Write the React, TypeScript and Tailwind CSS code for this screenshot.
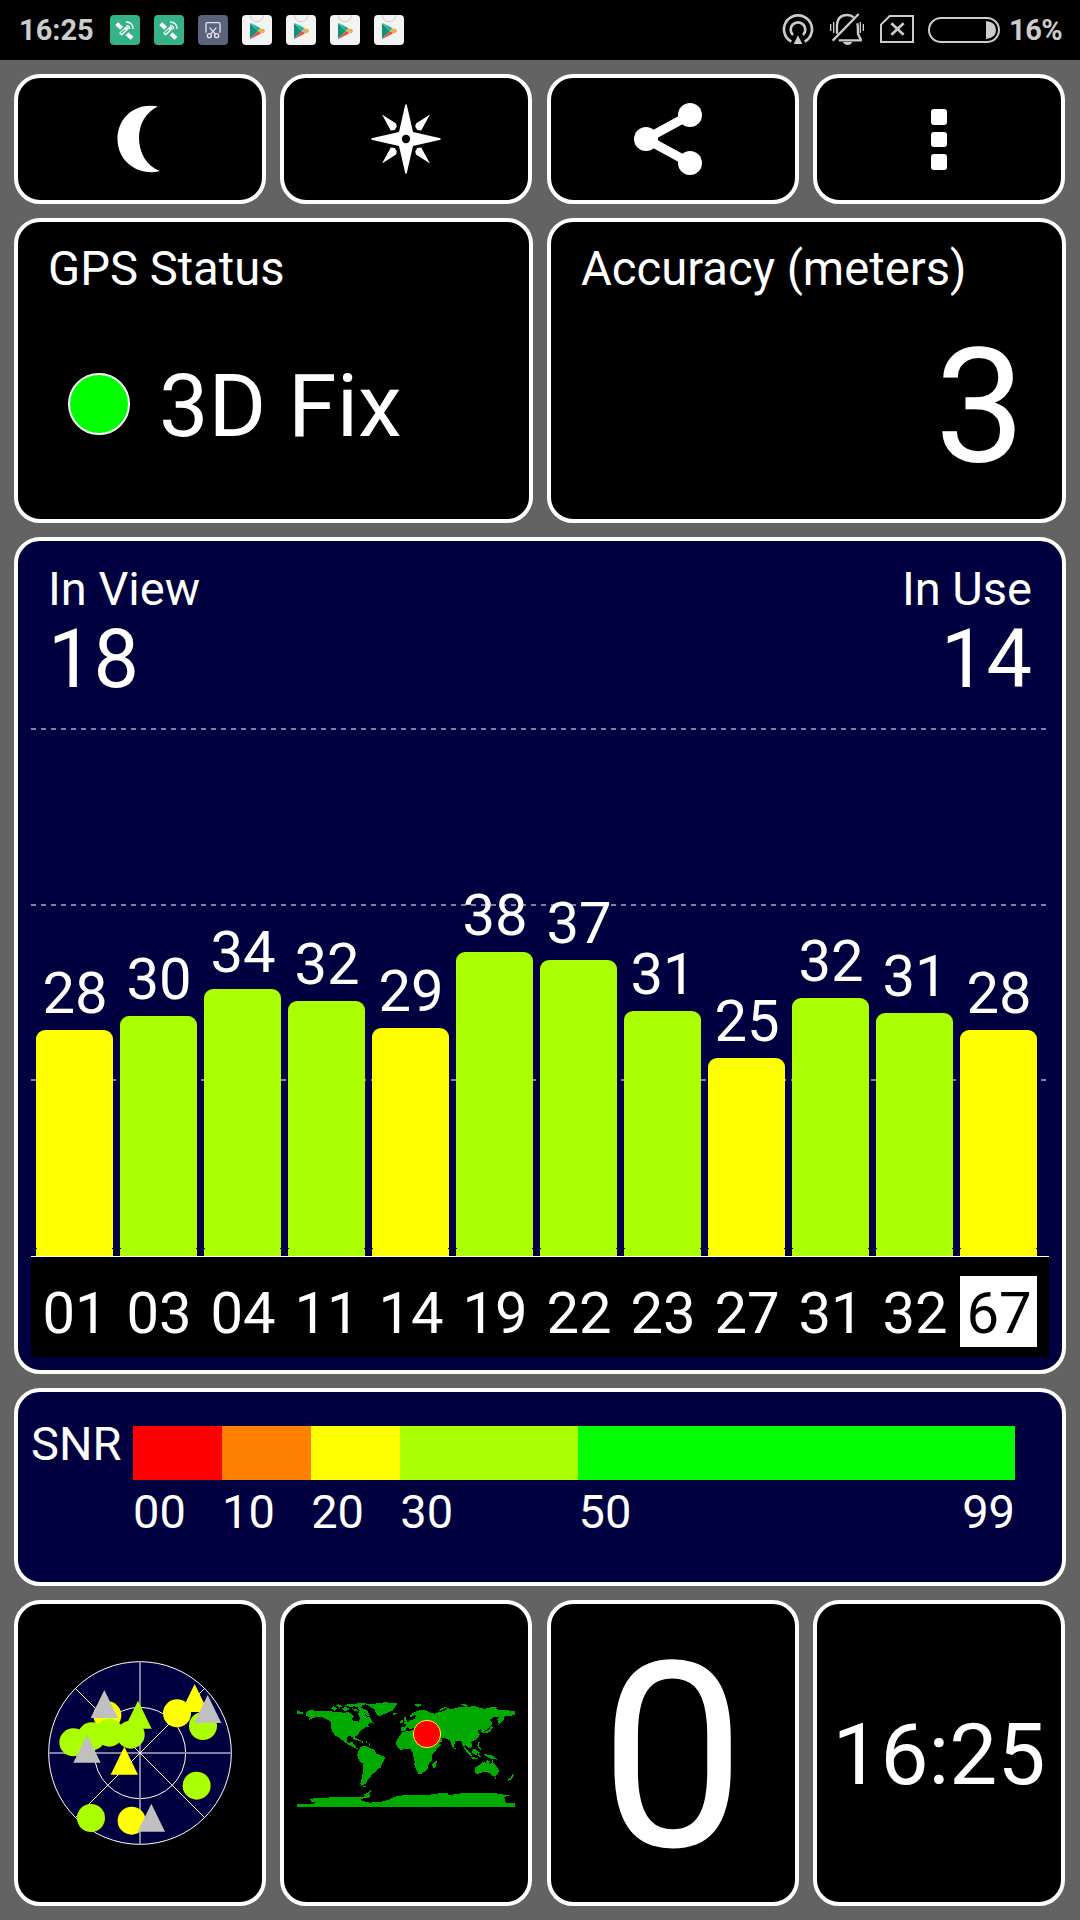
import React from "react";

const YELLOW = "#ffff00";
const LIME = "#aaff00";

const satellites = [
  { id: "01", snr: 28, height: 226, color: YELLOW },
  { id: "03", snr: 30, height: 240, color: LIME },
  { id: "04", snr: 34, height: 267, color: LIME },
  { id: "11", snr: 32, height: 255, color: LIME },
  { id: "14", snr: 29, height: 228, color: YELLOW },
  { id: "19", snr: 38, height: 304, color: LIME },
  { id: "22", snr: 37, height: 296, color: LIME },
  { id: "23", snr: 31, height: 245, color: LIME },
  { id: "27", snr: 25, height: 198, color: YELLOW },
  { id: "31", snr: 32, height: 258, color: LIME },
  { id: "32", snr: 31, height: 243, color: LIME },
  { id: "67", snr: 28, height: 226, color: YELLOW, inverted: true },
];

const snrScale = [
  { label: "00", span: 10, color: "#ff0000" },
  { label: "10", span: 10, color: "#ff8000" },
  { label: "20", span: 10, color: "#ffff00" },
  { label: "30", span: 20, color: "#aaff00" },
  { label: "50", span: 49, color: "#00ff00", end: "99" },
];

function Card({ className = "", children }: { className?: string; children?: React.ReactNode }) {
  return <section className={`rounded-[26px] border-4 border-white ${className}`}>{children}</section>;
}

function SatelliteIcon() {
  return (
    <svg width="30" height="30" viewBox="0 0 90 90" className="rounded-[4px] bg-[#35b288]">
      <g stroke="#fff" fill="none">
        <path d="M20 26l15 14M51 56l15 14" strokeWidth="12" />
        <path d="M31 58l22-21" strokeWidth="11" />
        <path d="M33 55l12-11" strokeWidth="4" stroke="#35b288" />
        <path d="M49 31q10 1 10 11M48 21q21 1 21 21" strokeWidth="4" />
      </g>
    </svg>
  );
}

function ScreenshotIcon() {
  return (
    <svg width="30" height="30" viewBox="0 0 90 90" className="rounded-[4px] bg-[#5b627c]">
      <g stroke="#e4e6ee" fill="none" strokeWidth="4">
        <path d="M24 53V27q0-4 4-4h34q4 0 4 4v26" />
        <path d="M35 38l18 20M55 38L37 58" />
        <circle cx="34" cy="62" r="6" />
        <circle cx="56" cy="62" r="6" />
      </g>
    </svg>
  );
}

function PlayStoreIcon() {
  return (
    <svg width="30" height="30" viewBox="0 0 90 90" className="rounded-[4px] bg-[#f3f3f3]">
      <path d="M25 0q3 20 20 20T65 0" fill="none" stroke="#c9c9c9" strokeWidth="3" />
      <path d="M24 24v48l24-24z" fill="#12907a" />
      <path d="M26 24l22 24 8-8z" fill="#16b796" />
      <path d="M24 73l24-25 10 7z" fill="#e8503f" />
      <path d="M48 48l8-7h8l6 6-5 7h-9z" fill="#e9ae51" />
    </svg>
  );
}

function StatusBar() {
  return (
    <header className="flex h-[60px] items-center bg-black pl-[19px] pr-[18px] text-[29px] font-bold leading-none text-[#cccccc]">
      <span className="w-[91px]">16:25</span>
      <div className="flex gap-[14px]">
        <SatelliteIcon />
        <SatelliteIcon />
        <ScreenshotIcon />
        <PlayStoreIcon />
        <PlayStoreIcon />
        <PlayStoreIcon />
        <PlayStoreIcon />
      </div>
      <svg width="240" height="34" viewBox="60 39 720 102" className="ml-auto" fill="none" stroke="#cccccc">
        <path d="M94 125a42 42 0 1 1 40 0" strokeWidth="8" />
        <path d="M99 105a22 22 0 1 1 30 0" strokeWidth="8" />
        <path d="M114 106l13 26h-26z" fill="#cccccc" stroke="none" />
        <path d="M231 101V75q2-30 31-30 12 0 19 7M292 70q2 8 2 32l8 16v3h-66" strokeWidth="7" />
        <path d="M218 122l78-80" strokeWidth="7" />
        <path d="M249 126h28q-4 9-14 9t-14-9z" fill="#cccccc" stroke="none" />
        <path d="M212 72v21M221 66v33M301 66v33M310 72v21" strokeWidth="4" />
        <path d="M363 74l26-26h70v78h-96z" strokeWidth="6" />
        <path d="M394 70l37 34M431 70l-37 34" strokeWidth="8" />
        <rect x="507" y="54" width="210" height="72" rx="36" strokeWidth="6" />
        <path d="M678 63q30 3 30 27t-30 27z" fill="#cccccc" stroke="none" />
      </svg>
      <span className="ml-[-11px] w-[53px] text-right text-[29px] tracking-[-0.5px]">16%</span>
    </header>
  );
}

function Toolbar() {
  const button = "flex h-full w-[252px] items-center justify-center bg-black";
  return (
    <nav className="flex h-[130px] w-[1051px] justify-between">
      <Card className={button}>
        <svg width="44" height="68" viewBox="0 0 44 68" className="ml-[-2px]" fill="#fff">
          <path d="M41 1.500C20-3 0.500 11 0.500 34S22 71.500 43 66C29 61 22 47 22 33S29 7 41 1.500z" />
        </svg>
      </Card>
      <Card className={button}>
        <svg width="70" height="70" viewBox="-35 -35 70 70" fill="#fff">
          <path d="M-.7-34.500h1.400L7-7 34.500-.7v1.400L7 7 .7 34.500H-.7L-7 7-34.500.7V-.7L-7-7z" />
          <path d="M-24-24.500l14 9 .800 3-2 3.500-4 .500zM24-24.500l-14 9-.800 3 2 3.500 4 .500zM-24 24.500l14-9 .800-3-2-3.500-4-.500zM24 24.500l-14-9-.800-3 2-3.500 4-.500z" />
          <circle r="4.200" fill="#000" />
        </svg>
      </Card>
      <Card className={button}>
        <svg width="70" height="74" viewBox="0 0 70 74" className="ml-[-9px]" fill="#fff">
          <path d="M57 13L13 37l44 24" fill="none" stroke="#fff" strokeWidth="9" />
          <circle cx="13" cy="37" r="12" />
          <circle cx="57" cy="13" r="12" />
          <circle cx="57" cy="61" r="12" />
        </svg>
      </Card>
      <Card className={button}>
        <div className="mt-px flex flex-col gap-[7px]">
          <i className="size-[15.500px] rounded-[3px] bg-white" />
          <i className="size-[15.500px] rounded-[3px] bg-white" />
          <i className="size-[15.500px] rounded-[3px] bg-white" />
        </div>
      </Card>
    </nav>
  );
}

function GridLine() {
  return (
    <i className="h-[2px] w-[1015px] bg-[repeating-linear-gradient(90deg,#8080a0_0_5px,transparent_5px_10px)]" />
  );
}

function SignalChart() {
  return (
    <Card className="h-[837px] bg-[#000040] px-[13px] pt-[24px]">
      <div className="flex justify-between pl-[17px] pr-[17px] text-[47px] leading-none">
        <div>
          <h2>In View</h2>
          <p className="mt-[7px] text-[81px] leading-none">18</p>
        </div>
        <div className="text-right">
          <h2>In Use</h2>
          <p className="mt-[7px] text-[81px] leading-none">14</p>
        </div>
      </div>
      <div className="relative mt-[28px] flex h-[529px] items-end gap-[7px] border-b border-white pl-[5px]">
        <div className="absolute inset-x-0 top-0 flex h-[353px] flex-col justify-between">
          <GridLine />
          <GridLine />
          <GridLine />
        </div>
        {satellites.map((s) => (
          <div key={s.id} className="relative w-[77px] text-center">
            <p className="mb-[8px] pl-px text-[58px] leading-none">{s.snr}</p>
            <div
              className="flex flex-col justify-end rounded-t-[9px] pb-[7px]"
              style={{ height: s.height, backgroundColor: s.color }}
            >
              <div className="flex h-px justify-between">
                <i className="w-px bg-[#000040]" />
                <i className="w-px bg-[#000040]" />
              </div>
            </div>
          </div>
        ))}
      </div>
      <div className="flex h-[100px] gap-[7px] bg-black pl-[5px] pt-[19px] text-center text-[58px] leading-[75px]">
        {satellites.map((s) => (
          <span key={s.id} className={`h-[71px] w-[77px] pl-px ${s.inverted ? "bg-white text-black" : ""}`}>
            {s.id}
          </span>
        ))}
      </div>
    </Card>
  );
}

function SnrLegend() {
  return (
    <Card className="flex h-[198px] bg-[#000040] pl-[13px] pt-[28px] text-[47px] leading-none">
      <span className="w-[102px]">SNR</span>
      <div className="mt-[6px] flex w-[882px]">
        {snrScale.map((s) => (
          <div key={s.label} style={{ flex: `${s.span} 0 0px` }}>
            <div className="h-[54px]" style={{ backgroundColor: s.color }} />
            <div className="mt-[8px] flex justify-between">
              <span>{s.label}</span>
              {s.end && <span>{s.end}</span>}
            </div>
          </div>
        ))}
      </div>
    </Card>
  );
}

function SkyPlot() {
  const circles: [number, number, string][] = [
    [232, 226, YELLOW],
    [519, 258, LIME],
    [441, 220, YELLOW],
    [130, 307, LIME],
    [185, 289, LIME],
    [302, 284, LIME],
    [238, 278, LIME],
    [500, 437, LIME],
    [183, 534, LIME],
    [305, 542, YELLOW],
  ];
  const triangles: [number, number, string][] = [
    [324, 182, LIME],
    [283, 320, YELLOW],
    [223, 150, "#c0c0c0"],
    [171, 284, "#c0c0c0"],
    [364, 491, "#c0c0c0"],
    [533, 165, "#c0c0c0"],
  ];
  const tri = (x: number, y: number) => `M${x} ${y}l41 84h-82z`;
  return (
    <svg width="186" height="186" viewBox="51 60 558 558">
      <circle cx="330" cy="339" r="274" fill="#000040" stroke="#fff" strokeWidth="3" />
      <circle cx="330" cy="339" r="137" fill="none" stroke="#fff" strokeWidth="3" />
      <path d="M330 65v548M56 339h548" stroke="#8080a0" strokeWidth="6" />
      <path d="M136 145l388 388M524 145L136 533" stroke="#fff" strokeWidth="3" />
      <path d={tri(494, 132)} fill={YELLOW} />
      {circles.map(([x, y, c]) => (
        <circle key={x} cx={x} cy={y} r="42" fill={c} />
      ))}
      {triangles.map(([x, y, c]) => (
        <path key={x} d={tri(x, y)} fill={c} />
      ))}
    </svg>
  );
}

const LAND = [
  // North America
  "M51 87L55 93 68 97V101H51ZM80 93L95 90 112 94 130 93 150 94 170 96 190 98 205 97 215 101 222 110 214 118 222 124 232 122 238 128 239 112 234 100 240 92 252 98 262 112 270 110 274 120 282 132 270 128 262 136 268 142 255 142 245 150 238 157 232 166 226 169 224 178 222 182 217 170 205 168 200 175 201 185 208 189 217 184 219 192 226 196 228 203 236 203 232 207 222 202 205 194 196 188 186 180 175 172 165 166 158 156 153 145 154 130 145 120 130 113 115 110 100 114 84 122 90 112 78 106Z",
  // Greenland and the Arctic islands
  "M255 71L285 71 318 66 330 69 352 70 345 80 338 92 322 98 305 106 295 109 288 100 284 88 270 80ZM337 98H352V103L340 104ZM153 85L161 79 173 85 164 92ZM168 76L177 73 187 79 178 83ZM184 86L197 81 209 87 197 94ZM194 77L205 72 227 76 217 81ZM211 73L241 69 265 71 247 76 242 85 231 82ZM216 85L230 87 235 92 225 94ZM232 84L246 83 262 93 270 108 261 109 254 97 242 93Z",
  // Caribbean
  "M222 174L235 176 245 184 237 183 223 177ZM240 183L252 185 249 189ZM258 184H262V188H258ZM266 189H270V198H266Z",
  // South America
  "M240 203L250 197 262 200 275 206 284 210 288 220 302 226 315 231 312 242 305 252 303 262 292 268 288 276 278 282 270 292 262 300 257 312 243 318 241 310 245 294 248 280 250 262 250 252 240 244 234 236 232 225 236 212ZM250 317H257V321H250Z",
  // Europe and Asia
  "M364 153L363 141 376 141 378 134 372 132 385 128 390 122 402 118 408 110 406 105 390 113 388 107 402 97 418 91 436 91 450 98 464 101 480 96 496 92 502 84 514 88 537 82 560 80 585 79 610 86 640 84 660 90 684 91 704 94V105L690 108 672 110 668 121 656 130 652 118 658 110 640 112 628 120 636 128 634 137 622 149 612 152 614 160 606 160 602 148 594 152 600 164 592 176 578 184 573 187 578 198 570 206 562 202 556 196 552 199 561 213 554 207 548 196 543 182 526 184 522 196 524 207 516 198 509 181 498 175 484 174 486 184 470 196 460 180 442 160 410 152 400 144 390 148 382 140 376 152Z",
  // Africa
  "M366 157L380 153 398 151 402 159 416 162 432 166 460 166 470 185 482 193 472 205 461 219 455 230 455 244 446 252 444 264 435 274 425 281 414 281 409 268 403 255 404 243 400 230 398 218 392 208 377 207 362 210 350 198 348 184 356 172Z",
  // Madagascar, Britain, Svalbard and the Russian Arctic
  "M465 243H471L466 263 459 265 457 254ZM370 110H377L379 120 385 128 371 134 374 124ZM362 121H369L368 129H360ZM401 74L418 72 427 75 412 81ZM474 94L483 86 497 80 500 83 486 91ZM543 73L555 72 570 79 555 80ZM630 81L652 82 647 86 630 85Z",
  // Japan, the Philippines and Indonesia
  "M634 137L638 142 632 152 626 157 610 160 615 153 626 150 631 142ZM671 112L674 114 662 130 654 138 652 136 662 126ZM524 202L528 205 525 208ZM594 185L599 187 597 199 604 206 600 211 592 197ZM554 204L562 208 571 219 576 227 571 228 557 212ZM579 207L588 208 593 217 589 225 580 222 575 215ZM572 229L584 232 594 236 585 238 572 234ZM592 214L601 216 597 223 604 232 596 230ZM613 221L623 224 636 226 646 232 653 241 643 237 634 238 620 229 612 225Z",
  // Australia and New Zealand
  "M586 262L598 255 608 246 617 248 620 241 630 243 628 249 634 253 637 238 641 250 650 260 657 272 653 283 646 290 638 289 630 281 627 280 618 275 604 278 592 282 585 279ZM643 291H649L646 297ZM697 282L701 286 698 292 691 300 684 303 682 300 693 292Z",
  // Antarctica
  "M51 372H100L104 367 88 363 96 360 84 360 105 354 160 352 200 350 238 352 260 348 250 345 262 339 272 330V337L263 343H270V352L242 357 245 362 270 368 310 364 330 357 345 350 370 346 420 346 460 343 490 338 503 340 506 347 530 341 550 340 600 338 640 339 672 344 687 346 673 352 676 362 672 367 690 369H705V381H51Z",
];

function WorldMap() {
  return (
    <svg width="219" height="107" viewBox="51 63 657 321" className="mt-[2px]">
      <g fill="#00aa00" shapeRendering="crispEdges">
        {LAND.map((d) => (
          <path key={d} d={d} />
        ))}
      </g>
      <circle cx="441" cy="162" r="41" fill="#ff0000" stroke="#ffff00" strokeWidth="3" />
    </svg>
  );
}

export default function App() {
  const tile = "flex h-full w-[252px] items-center justify-center bg-black";
  return (
    <div className="flex h-[1920px] w-[1080px] flex-col overflow-hidden bg-[#636363] font-['Roboto',sans-serif] text-white">
      <StatusBar />
      <main className="flex flex-col gap-[14px] px-[14px] pt-[14px]">
        <Toolbar />
        <div className="flex h-[305px] justify-between">
          <Card className="w-[519px] bg-black pl-[30px] pt-[24px]">
            <h2 className="text-[47.200px] leading-[47px]">GPS Status</h2>
            <div className="mt-[69px] flex items-start gap-[29px] pl-[20px]">
              <i className="mt-[11px] size-[62px] rounded-full border-2 border-white bg-[#00ff00]" />
              <span className="text-[88px] leading-none">3D Fix</span>
            </div>
          </Card>
          <Card className="w-[519px] bg-black pl-[30px] pr-[37px] pt-[24px]">
            <h2 className="text-[47.200px] leading-[47px]">Accuracy (meters)</h2>
            <p className="mt-[34px] text-right text-[160px] leading-none">3</p>
          </Card>
        </div>
        <SignalChart />
        <SnrLegend />
        <div className="flex h-[306px] w-[1051px] justify-between">
          <Card className={tile}>
            <SkyPlot />
          </Card>
          <Card className={tile}>
            <WorldMap />
          </Card>
          <Card className={`${tile} pt-[8px] text-[259px] leading-none`}>0</Card>
          <Card className={`${tile} pt-[6px] text-[85.500px] leading-none`}>16:25</Card>
        </div>
      </main>
    </div>
  );
}
